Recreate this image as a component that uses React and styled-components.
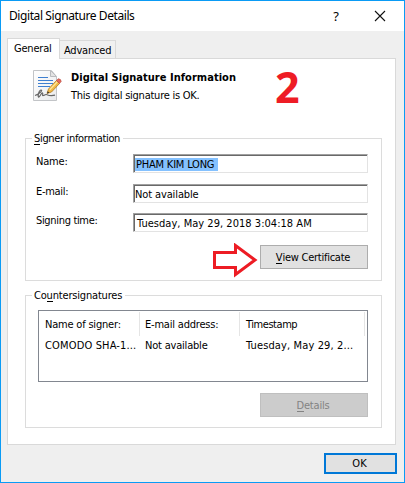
import React from 'react';
import styled, { createGlobalStyle, css } from 'styled-components';

const Global = createGlobalStyle`
  * { box-sizing: border-box; }
  body { margin: 0; }
`;

const Window = styled.div`
  width: 405px;
  height: 483px;
  border: 1px solid #0a9bf5;
  background: #efefef;
  color: #000;
  font: 11px/14px 'DejaVu Sans Condensed', 'DejaVu Sans', sans-serif;
  font-stretch: condensed;
  white-space: nowrap;
  overflow: hidden;
`;

const TitleBar = styled.header`
  display: flex;
  height: 30px;
  padding: 0 18px 0 8px;
  align-items: center;
  background: #fff;
  font-family: 'Noto Sans', sans-serif;
  font-size: 12px;
`;

const Label = styled.span`
  display: inline-block;
  letter-spacing: ${(p) => p.$track || 0}px;
  u { text-decoration: none; box-shadow: 0 1px 0 currentColor; display: inline-block; height: 12px; line-height: 14px; }
`;

const HelpMark = styled.span`
  margin-left: auto;
  margin-right: 35px;
  font-size: 13px;
`;

const Tabs = styled.nav`
  display: flex;
  height: 27px;
  padding: 7px 0 0 6px;
  align-items: flex-end;
`;

const Tab = styled.div`
  border: 1px solid #d9d9d9;
  border-bottom: 0;
  ${(p) => p.$active
    ? css`width: 53px; height: 21px; padding: 3px 0 0 6px; background: #fff; margin-bottom: -1px; z-index: 1; position: relative;`
    : css`width: 56px; height: 18px; padding: 3px 0 0 4px; background: #f0f0f0; border-left: 0;`}
`;

const Pane = styled.main`
  width: 389px;
  height: 387px;
  margin-left: 6px;
  padding: 0 13px 0 17px;
  border: 1px solid #d9d9d9;
  background: #fff;
`;

const Intro = styled.section`
  display: flex;
  height: 79px;
  padding: 10px 0 0 6px;
`;

const IntroText = styled.div`
  display: flex;
  flex-direction: column;
  gap: 4px;
  width: 212px;
  padding: 2px 0 0 8px;
`;

const Heading = styled(Label)`
  font-weight: bold;
`;

const StepNumber = styled.div`
  height: 40px;
  margin-top: -2px;
  color: #ee1c25;
  font: bold 43px/40px 'Open Sans', sans-serif;
`;

const Group = styled.section`
  width: 357px;
  height: ${(p) => p.$height}px;
  margin-bottom: 14px;
  border: 1px solid #dcdcdc;
`;

const Legend = styled.h2`
  width: max-content;
  height: 14px;
  margin: -7px 0 0 6px;
  padding: 0 3px 0 2px;
  background: #fff;
  font: inherit;
`;

const Fields = styled.div`
  display: grid;
  grid-template-columns: 97px 235px;
  grid-template-rows: 30px 29px 32px;
  padding: 8px 0 0 10px;
`;

const FieldLabel = styled(Label)`
  padding-top: 1px;
`;

const Field = styled.div`
  height: 19px;
  padding: 3px 0 0 ${(p) => (p.$wide ? 3 : 1)}px;
  border: 1px solid;
  border-color: #a0a0a0 #e3e3e3 #e3e3e3 #a0a0a0;
  box-shadow: inset 1px 1px 0 #696969;
`;

const Selected = styled.span`
  display: inline-block;
  height: 13px;
  padding: 0 4px 0 1px;
  line-height: 13px;
  background: #84c1ff;
  letter-spacing: ${(p) => p.$track || 0}px;
`;

const Button = styled.button`
  display: flex;
  align-items: center;
  justify-content: center;
  width: 108px;
  height: 24px;
  padding: 1px 2px 0 0;
  border: 1px solid #adadad;
  background: #e1e1e1;
  color: #000;
  font: inherit;
  &:disabled { color: #838383; background: #ccc; border-color: #bfbfbf; }
`;

const OkButton = styled(Button)`
  width: 73px;
  height: 21px;
  border: 2px solid #0078d7;
`;

const Action = styled.div`
  display: flex;
  align-items: flex-start;
  justify-content: flex-end;
  gap: 2px;
  padding-right: 13px;
`;

const ArrowIcon = styled.svg`
  margin-top: -2px;
`;

const List = styled.div`
  width: 330px;
  height: 72px;
  margin: 7px 0 11px 12px;
  padding-top: 1px;
  border: 1px solid #828790;
`;

const ListRow = styled.div`
  display: grid;
  grid-template-columns: 101px 100px 125px;
  height: ${(p) => (p.$header ? 24 : 20)}px;
`;

const Cell = styled.div`
  padding: ${(p) => (p.$header ? 6 : 3)}px 0 0 ${(p) => p.$indent}px;
  border-right: ${(p) => (p.$header ? '1px solid #e5e5e5' : '0')};
`;

const Footer = styled.footer`
  display: flex;
  justify-content: flex-end;
  padding: 8px 7px 0 0;
`;

const DocumentIcon = () => (
  <svg width="32" height="33" viewBox="0 0 32 33" fill="none">
    <defs>
      <linearGradient id="paper" x2="1" y2="1">
        <stop stopColor="#fff" /><stop offset="1" stopColor="#e9eaec" />
      </linearGradient>
    </defs>
    <path d="M2.5 1.5h18l5 6v24h-23z" fill="url(#paper)" stroke="#c2c4c7" />
    <path d="M19.5 1.500v6h6z" fill="#e3e3e3" stroke="#b9bbbe" />
    <path d="M7 8.5h10M7 11.5h15M7 14.5h15M7 17.5h12" stroke="#3e7fd0" strokeWidth="1.2" />
    <path d="M4 26.500C9 25 12 21 10 21S6.500 27 7.500 28s3-5 4-4-1 3 1 2.500 2-1.500 3.500-.8 4 1.500 8 .5" stroke="#666" strokeWidth="1.2" />
    <path d="M16 24.500l1.500-4.500 8-8.500 3 3-8 8.500z" fill="#f2b944" stroke="#b17a20" strokeWidth=".8" />
    <path d="M18.800 20.800l7.500-8" stroke="#ffe79a" strokeWidth="1.3" />
    <path d="M25.500 11.500l1.700-1.800q3 .3 3 2.800l-1.700 2z" fill="#e4695c" stroke="#b0483e" strokeWidth=".6" />
    <path d="M16 24.500l.8-2.300 1.600 1.500z" fill="#333" />
  </svg>
);

export default function App() {
  return (
    <Window>
      <Global />
      <TitleBar>
        <Label $track={-0.41}>Digital Signature Details</Label>
        <HelpMark>?</HelpMark>
        <svg width="12" height="12" viewBox="0 0 12 12"><path d="M1 1l10 10M11 1L1 11" stroke="#111" strokeWidth="1.1" /></svg>
      </TitleBar>
      <Tabs>
        <Tab $active><Label $track={-0.2}>General</Label></Tab>
        <Tab><Label $track={-0.2}>Advanced</Label></Tab>
      </Tabs>
      <Pane>
        <Intro>
          <DocumentIcon />
          <IntroText>
            <Heading $track={0.03}>Digital Signature Information</Heading>
            <Label $track={-0.24}>This digital signature is OK.</Label>
          </IntroText>
          <StepNumber>2</StepNumber>
        </Intro>
        <Group $height={143}>
          <Legend><Label $track={-0.33}><u>S</u>igner information</Label></Legend>
          <Fields>
            <FieldLabel $track={-0.2}>Name:</FieldLabel>
            <Field><Selected $track={-0.2}>PHAM KIM LONG</Selected></Field>
            <FieldLabel $track={-0.3}>E-mail:</FieldLabel>
            <Field><Label $track={-0.12}>Not available</Label></Field>
            <FieldLabel $track={-0.33}>Signing time:</FieldLabel>
            <Field $wide><Label $track={0.03}>Tuesday, May 29, 2018 3:04:18 AM</Label></Field>
          </Fields>
          <Action>
            <ArrowIcon width="45" height="35" viewBox="0 0 45 35">
              <path d="M1.500 9.500h21v-7l19.500 14.500L22.500 31.500v-7h-21z" fill="none" stroke="#ed1c24" strokeWidth="3" />
            </ArrowIcon>
            <Button><Label $track={-0.25}><u>V</u>iew Certificate</Label></Button>
          </Action>
        </Group>
        <Group $height={133}>
          <Legend><Label $track={-0.18}>Co<u>u</u>ntersignatures</Label></Legend>
          <List>
            <ListRow $header>
              <Cell $header $indent={6}><Label $track={-0.2}>Name of signer:</Label></Cell>
              <Cell $header $indent={5}><Label $track={-0.2}>E-mail address:</Label></Cell>
              <Cell $header $indent={6}><Label $track={-0.45}>Timestamp</Label></Cell>
            </ListRow>
            <ListRow>
              <Cell $indent={6}><Label $track={0.15}>COMODO SHA-1...</Label></Cell>
              <Cell $indent={5}><Label $track={-0.2}>Not available</Label></Cell>
              <Cell $indent={6}><Label $track={0.13}>Tuesday, May 29, 2...</Label></Cell>
            </ListRow>
          </List>
          <Action><Button disabled><Label $track={-0.2}><u>D</u>etails</Label></Button></Action>
        </Group>
      </Pane>
      <Footer><OkButton>OK</OkButton></Footer>
    </Window>
  );
}
